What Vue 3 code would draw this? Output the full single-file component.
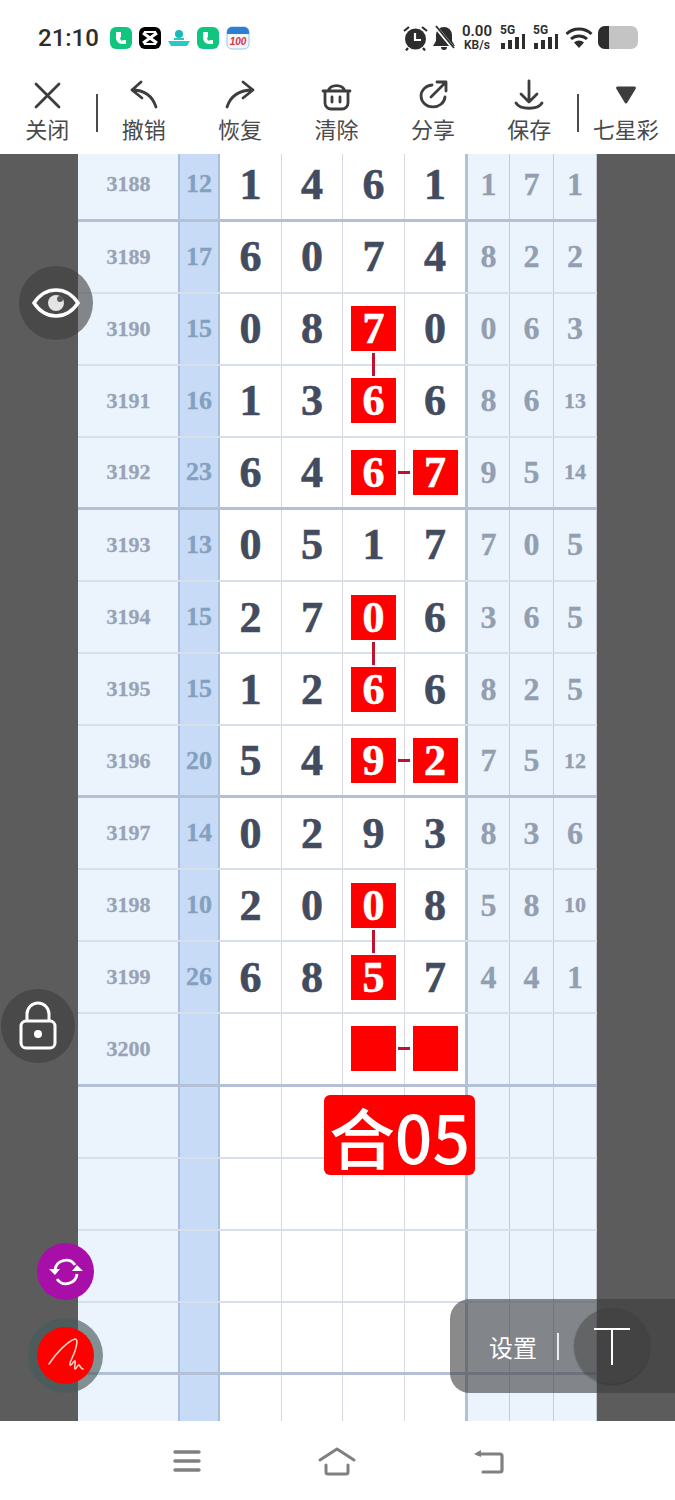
<script setup>
const rows = [
  { no: "3188", sum: "12", main: "1461", side: ["1", "7", "1"], heavy: true },
  { no: "3189", sum: "17", main: "6074", side: ["8", "2", "2"] },
  { no: "3190", sum: "15", main: "0870", side: ["0", "6", "3"], marks: [2], down: true },
  { no: "3191", sum: "16", main: "1366", side: ["8", "6", "13"], marks: [2] },
  { no: "3192", sum: "23", main: "6467", side: ["9", "5", "14"], marks: [2, 3], heavy: true },
  { no: "3193", sum: "13", main: "0517", side: ["7", "0", "5"] },
  { no: "3194", sum: "15", main: "2706", side: ["3", "6", "5"], marks: [2], down: true },
  { no: "3195", sum: "15", main: "1266", side: ["8", "2", "5"], marks: [2] },
  { no: "3196", sum: "20", main: "5492", side: ["7", "5", "12"], marks: [2, 3], heavy: true },
  { no: "3197", sum: "14", main: "0293", side: ["8", "3", "6"] },
  { no: "3198", sum: "10", main: "2008", side: ["5", "8", "10"], marks: [2], down: true },
  { no: "3199", sum: "26", main: "6857", side: ["4", "4", "1"], marks: [2] },
  { no: "3200", sum: "", main: "    ", side: ["", "", ""], marks: [2, 3], heavy: true },
  { no: "", sum: "", main: "    ", side: ["", "", ""] },
  { no: "", sum: "", main: "    ", side: ["", "", ""] },
  { no: "", sum: "", main: "    ", side: ["", "", ""] },
  { no: "", sum: "", main: "    ", side: ["", "", ""], heavy: true },
  { no: "", sum: "", main: "    ", side: ["", "", ""] },
];

const tools = [
  { label: "关闭", icon: "close" },
  { label: "撤销", icon: "undo" },
  { label: "恢复", icon: "redo" },
  { label: "清除", icon: "clear" },
  { label: "分享", icon: "share" },
  { label: "保存", icon: "save" },
  { label: "七星彩", icon: "pick" },
];
</script>

<template>
  <div class="page">
    <header class="status">
      <span class="time">21:10</span>
      <div class="apps">
        <svg width="22" height="22" viewBox="0 0 22 22"><rect width="22" height="22" rx="6" fill="#10c67f" /><path d="M6 5v6a6 6 0 0 0 6 6h4v-4h-3l-1 1a4 4 0 0 1-2-3l1-1V5z" fill="#fff" /></svg>
        <svg width="22" height="22" viewBox="0 0 22 22"><rect width="22" height="22" rx="6" fill="#000" /><path d="M4 6l14 10M18 6L4 16" stroke="#fff" stroke-width="3" fill="none" /><path d="M5 5h12M5 17h12" stroke="#fff" stroke-width="2" /></svg>
        <svg width="22" height="22" viewBox="0 0 22 22"><circle cx="11" cy="7" r="4" fill="#19b9b4" /><path d="M0 14h22l-3 5H3z" fill="#28c9c2" /><path d="M6 11h10v2H6z" fill="#28c9c2" /></svg>
        <svg width="22" height="22" viewBox="0 0 22 22"><rect width="22" height="22" rx="6" fill="#10c67f" /><path d="M6 5v6a6 6 0 0 0 6 6h4v-4h-3l-1 1a4 4 0 0 1-2-3l1-1V5z" fill="#fff" /></svg>
        <svg width="24" height="24" viewBox="0 0 24 24"><rect x="1" y="1" width="22" height="22" rx="5" fill="#f3f7fb" stroke="#9cc4e6" /><path d="M1 6a5 5 0 0 1 5-5h12a5 5 0 0 1 5 5v2H1z" fill="#2c7fd0" /><text x="12" y="19" text-anchor="middle" font-size="10" font-weight="700" font-style="italic" fill="#d8343f" font-family="Liberation Sans, sans-serif">100</text></svg>
      </div>
      <div class="sys">
        <svg width="25" height="26" viewBox="0 0 25 26"><circle cx="12.500" cy="14" r="10.500" fill="#2d2d2d" /><path d="M12 8v7h6" stroke="#fff" stroke-width="2.200" fill="none" /><path d="M1 6l5-4M24 6l-5-4M5 23l-2 2.500M20 23l2 2.500" stroke="#2d2d2d" stroke-width="2.200" /></svg>
        <svg class="bell" width="22" height="26" viewBox="0 0 22 26"><path d="M11 2a8 8 0 0 0-8 8v6l-3 5h22l-3-5v-6a8 8 0 0 0-8-8z" fill="#2d2d2d" /><path d="M8 22a3 3 0 0 0 6 0z" fill="#2d2d2d" /><path d="M2 1l19 23" stroke="#fff" stroke-width="3.600" /><path d="M3 1l18 22" stroke="#2d2d2d" stroke-width="1.800" /></svg>
        <div class="speed"><b>0.00</b><small>KB/s</small></div>
        <div class="signal">
          <small>5G</small>
          <svg width="26" height="16" viewBox="0 0 26 16"><path d="M1 9h4v6H1zM8 6h4v9H8zM15 3h4v12h-4zM22 0h3v15h-3z" fill="#2d2d2d" /></svg>
        </div>
        <div class="signal">
          <small>5G</small>
          <svg width="26" height="16" viewBox="0 0 26 16"><path d="M1 9h4v6H1zM8 6h4v9H8zM15 3h4v12h-4zM22 0h3v15h-3z" fill="#2d2d2d" /></svg>
        </div>
        <svg class="wifi" width="28" height="22" viewBox="0 0 28 22"><path d="M1.500 7a18 18 0 0 1 25 0M6 12a12 12 0 0 1 16 0" stroke="#2d2d2d" stroke-width="3" fill="none" /><path d="M9 15.500a7 7 0 0 1 10 0L14 21z" fill="#2d2d2d" /></svg>
        <div class="battery"><i></i></div>
      </div>
    </header>

    <nav class="toolbar">
      <template v-for="t in tools" :key="t.label">
        <div class="tool">
          <svg width="34" height="34" viewBox="0 0 34 34" fill="none" stroke="#3d3d3d" stroke-width="2.800" stroke-linecap="round" stroke-linejoin="round">
            <path v-if="t.icon === 'close'" d="M6 5l23 23M29 5L6 28" />
            <path v-if="t.icon === 'undo'" d="M14 3L5 11l10 8M5 11c12 0 20 5 24 17" />
            <path v-if="t.icon === 'redo'" d="M20 3l10 8-10 8M30 11C18 11 8 16 4 28" />
            <g v-if="t.icon === 'clear'"><path d="M4 12h27M6 12v12a6 6 0 0 0 6 6h11a6 6 0 0 0 6-6V12M9 12a9 8 0 0 1 17 0" /><path d="M13 18v5M21 18v5" /></g>
            <g v-if="t.icon === 'share'"><path d="M16 6a12 11 0 1 0 13 12" /><path d="M15 18L30 3M21 3h9v9" /></g>
            <g v-if="t.icon === 'save'"><path d="M17 2v20M9 15l8 8 8-8M4 24c4 7 22 7 26 0" /></g>
            <path v-if="t.icon === 'pick'" d="M8.500 9h17L17 23z" fill="#3d3d3d" />
          </svg>
          <span>{{ t.label }}</span>
        </div>
      </template>
      <i class="tool-sep tool-sep--left"></i>
      <i class="tool-sep tool-sep--right"></i>
    </nav>

    <main class="stage">
      <div class="sheet">
        <div v-for="(r, i) in rows" :key="i" class="row" :class="{ 'row--heavy': r.heavy }">
          <div class="cell cell-no">{{ r.no }}</div>
          <div class="cell cell-sum">{{ r.sum }}</div>
          <div v-for="(d, j) in r.main.split('')" :key="j" class="cell cell-main">
            <span v-if="r.marks && r.marks.includes(j)" class="mark">
              {{ d }}
              <i v-if="r.down" class="link-down"></i>
              <i v-if="j === 2 && r.marks.length === 2" class="link-side"></i>
            </span>
            <template v-else>{{ d }}</template>
          </div>
          <div v-for="(s, j) in r.side" :key="j" class="cell cell-side" :class="{ 'cell-side--small': s.length > 1, 'cell-side--start': j === 0 }">{{ s }}</div>
        </div>
      </div>

      <div class="total">合05</div>

      <button class="float float--eye">
        <svg width="48" height="32" viewBox="0 0 48 32" fill="none"><path d="M2 16C8 7 15 3 24 3s16 4 22 13c-6 9-13 13-22 13S8 25 2 16z" stroke="#fff" stroke-width="3.500" /><circle cx="24" cy="16" r="8" fill="#fff" opacity=".85" /><circle cx="28" cy="12" r="3" fill="#5a5a5a" /></svg>
      </button>
      <button class="float float--lock">
        <svg width="38" height="50" viewBox="0 0 38 50" fill="none" stroke="#fff" stroke-width="3"><path d="M8 20v-7a11 11 0 0 1 22 0v7" /><rect x="2" y="20" width="34" height="27" rx="5" /><circle cx="19" cy="33" r="4" fill="#fff" stroke="none" /></svg>
      </button>
      <button class="float float--sync">
        <svg width="34" height="30" viewBox="0 0 34 30" fill="none" stroke="#fff" stroke-width="2.800"><path d="M6 13A11 11 0 0 1 26 8M28 17A11 11 0 0 1 8 22" /><path d="M0 12h11l-5 6zM23 14h11l-6-6z" fill="#fff" stroke="none" /></svg>
      </button>
      <button class="float float--ring">
        <span class="pen">
          <svg width="36" height="36" viewBox="0 0 36 36" fill="none" stroke="#ffd2c8" stroke-width="1.600" stroke-linecap="round" stroke-linejoin="round"><path d="M1 26C8 15 20 3 27 1c3 0 2 6 0 12-2 6-6 12-5 14 2 1 4-5 5-4 1 1-1 7 0 8 2 0 2-4 4-4 1 0 1 3 4 4" /></svg>
        </span>
      </button>

      <div class="settings">
        <span>设置</span>
        <i></i>
        <div class="type-btn">
          <svg width="38" height="38" viewBox="0 0 38 38" stroke="#fff" stroke-width="2"><path d="M1 2h36M19 2v36" /></svg>
        </div>
      </div>
    </main>

    <footer class="navbar">
      <svg width="30" height="24" viewBox="0 0 30 24" stroke="#808080" stroke-width="3.400" stroke-linecap="round"><path d="M3 3h24M3 12h24M3 21h24" /></svg>
      <svg width="38" height="30" viewBox="0 0 38 30" fill="none" stroke="#808080" stroke-width="3" stroke-linejoin="round" stroke-linecap="round"><path d="M2 14L19 3l17 11M8 19v7a2 2 0 0 0 2 2h18a2 2 0 0 0 2-2v-7" /></svg>
      <svg width="34" height="28" viewBox="0 0 34 28" fill="none" stroke="#808080" stroke-width="3.200" stroke-linecap="round"><path d="M6 7h22a2 2 0 0 1 2 2v14a2 2 0 0 1-2 2H11" /><path d="M2 7l7-4v7z" fill="#808080" stroke="none" /></svg>
    </footer>
  </div>
</template>

<style scoped>
.page {
  width: 675px;
  height: 1500px;
  overflow: hidden;
  display: flex;
  flex-direction: column;
  background: #fff;
  font-family: "Liberation Serif", "Noto Sans CJK SC", serif;
}

.status {
  height: 75px;
  flex: none;
  display: flex;
  align-items: center;
  padding: 0 37px 0 38px;
  box-sizing: border-box;
  font-family: "Roboto", "Noto Sans", sans-serif;
  color: #2d2d2d;
}

.time {
  font-size: 24px;
  font-weight: 500;
}

.apps {
  display: flex;
  align-items: center;
  gap: 7px;
  margin-left: 11px;
}

.sys {
  display: flex;
  align-items: center;
  margin-left: auto;
}

.bell {
  margin-left: 5px;
}

.speed {
  display: flex;
  flex-direction: column;
  align-items: center;
  margin-left: 6px;
  line-height: 1;
  width: 32px;
}

.speed b {
  font-size: 15px;
  font-weight: 600;
}

.speed small {
  font-size: 12px;
  font-weight: 600;
}

.signal small {
  font-size: 12px;
  font-weight: 700;
}

.signal {
  position: relative;
  width: 26px;
  height: 24px;
  margin-left: 7px;
  display: flex;
  align-items: flex-end;
}

.signal small {
  position: absolute;
  left: 0;
  top: -3px;
}

.wifi {
  margin-left: 6px;
}

.battery {
  width: 40px;
  height: 23px;
  margin-left: 5px;
  border-radius: 7px;
  background: #c4c4c4;
  overflow: hidden;
}

.battery i {
  display: block;
  width: 11px;
  height: 100%;
  background: #2d2d2d;
}

.toolbar {
  position: relative;
  height: 79px;
  flex: none;
  display: grid;
  grid-template-columns: repeat(7, 1fr);
  font-family: "Noto Sans CJK SC", sans-serif;
  color: #4a4a4a;
}

.tool {
  display: flex;
  flex-direction: column;
  align-items: center;
  padding-top: 4px;
  font-size: 22px;
  line-height: 30px;
  white-space: nowrap;
  margin-left: -2px;
}

.tool svg {
  display: block;
  height: 34px;
}

.tool-sep {
  position: absolute;
  top: 19px;
  height: 38px;
  width: 2px;
  background: #4a4a4a;
}

.tool-sep--left {
  left: 96px;
}

.tool-sep--right {
  left: 577px;
}

.stage {
  position: relative;
  flex: 1;
  min-height: 0;
  overflow: hidden;
  background: #5c5c5c;
  padding-left: 78px;
}

.sheet {
  width: 519px;
  margin-top: -4.500px;
}

.row {
  display: grid;
  grid-template-columns: 100px 42px 62px 61px 62px 61px 44px 44px 43px;
  height: 72.080px;
  box-sizing: border-box;
  border-bottom: 2px solid #d8dfe9;
}

.row--heavy {
  border-bottom: 3px solid #b3c0d6;
}

.cell {
  display: flex;
  align-items: center;
  justify-content: center;
  font-weight: 700;
}

.cell-no {
  background: #ebf3fd;
  color: #98a4b6;
  font-size: 22px;
  padding-left: 1px;
  -webkit-text-stroke: 0.3px currentColor;
}

.cell-sum {
  background: #c7dbf6;
  color: #85a0bf;
  font-size: 26px;
  border-left: 2px solid #a9c0dc;
  border-right: 2px solid #a9c0dc;
  -webkit-text-stroke: 0.3px currentColor;
}

.cell-main {
  background: #fff;
  color: #434b5e;
  font-size: 44px;
  border-right: 1px solid #d5dae2;
  -webkit-text-stroke: 0.6px currentColor;
}

.cell-side {
  background: #ebf3fd;
  color: #929fb0;
  font-size: 32px;
  border-right: 1px solid #c3cbd8;
  -webkit-text-stroke: 0.3px currentColor;
}

.cell-side--small {
  font-size: 22px;
}

.cell-side--start {
  border-left: 3px solid #b3c0d6;
  margin-left: -1px;
}

.mark {
  position: relative;
  width: 45px;
  height: 45px;
  display: flex;
  align-items: center;
  justify-content: center;
  background: #f00;
  color: #fff;
}

.link-down {
  position: absolute;
  left: 21px;
  top: 47px;
  width: 3px;
  height: 23px;
  background: #c11030;
}

.link-side {
  position: absolute;
  left: 47px;
  top: 21px;
  width: 12px;
  height: 3px;
  background: #c11030;
}

.total {
  position: absolute;
  left: 324px;
  top: 941px;
  width: 151px;
  height: 80px;
  display: flex;
  align-items: center;
  justify-content: center;
  border-radius: 6px;
  background: #f00;
  color: #fff;
  font-family: "Noto Sans CJK SC", sans-serif;
  font-size: 66px;
  font-weight: 500;
  line-height: 1;
}

.float {
  position: absolute;
  display: flex;
  align-items: center;
  justify-content: center;
  padding: 0;
  border: none;
  border-radius: 50%;
}

.float--eye {
  left: 19px;
  top: 112px;
  width: 74px;
  height: 74px;
  background: rgba(60, 60, 60, 0.6);
}

.float--lock {
  left: 1px;
  top: 835px;
  width: 74px;
  height: 74px;
  background: rgba(60, 60, 60, 0.6);
}

.float--sync {
  left: 37px;
  top: 1089px;
  width: 57px;
  height: 57px;
  background: #a80fa8;
}

.float--ring {
  left: 28px;
  top: 1164px;
  width: 75px;
  height: 75px;
  background: rgba(70, 90, 90, 0.65);
}

.pen {
  width: 57px;
  height: 57px;
  display: flex;
  align-items: center;
  justify-content: center;
  border-radius: 50%;
  background: #f00;
}

.settings {
  position: absolute;
  left: 450px;
  top: 1145px;
  width: 225px;
  height: 94px;
  display: flex;
  align-items: center;
  padding-left: 39px;
  box-sizing: border-box;
  border-radius: 20px 0 0 20px;
  background: rgba(60, 60, 60, 0.6);
  color: #fff;
  font-family: "Noto Sans CJK SC", sans-serif;
  font-size: 24px;
}

.settings > i {
  width: 2px;
  height: 27px;
  margin-left: 20px;
  background: #eee;
}

.type-btn {
  position: absolute;
  left: 124px;
  top: 9px;
  width: 76px;
  height: 76px;
  display: flex;
  align-items: center;
  justify-content: center;
  border-radius: 50%;
  background: rgba(60, 60, 60, 0.45);
  box-shadow: 0 1px 2px rgba(0, 0, 0, 0.25);
}

.navbar {
  height: 79px;
  flex: none;
  display: flex;
  align-items: center;
  background: #fff;
  padding-left: 172px;
  gap: 116px;
  box-sizing: border-box;
}
</style>

<style>
html,
body {
  margin: 0;
  background: #fff;
}
</style>
